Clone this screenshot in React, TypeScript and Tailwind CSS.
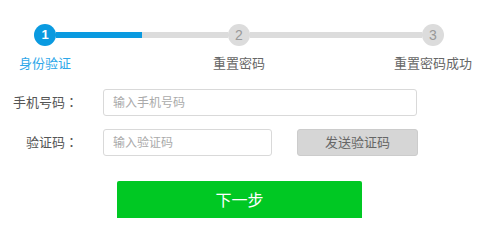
import React from 'react'

const font = { fontFamily: '"Liberation Sans", "Noto Sans CJK SC", sans-serif' }
const colon = { fontFamily: '"Noto Sans CJK TC", sans-serif' }

function Circle({ n, active }: { n: number; active?: boolean }) {
    return (
        <div className={`w-[22px] h-[22px] shrink-0 rounded-full flex items-center justify-center ${active ? 'bg-[#0a9ae0] text-white font-bold text-[13px]' : 'bg-[#dcdcdc] text-[#999] text-[14px]'}`}>
            {n}
        </div>
    )
}

function Label({ text, active }: { text: string; active?: boolean }) {
    return (
        <div className="w-[22px] flex justify-center">
            <span className={`whitespace-nowrap text-[13px] leading-[18px] ${active ? 'text-[#2ea7e9]' : 'text-[#666]'}`}>{text}</span>
        </div>
    )
}

export default function App() {
    return (
        <div className="w-[480px] h-[218px] overflow-hidden bg-white" style={font}>
            {/* steps */}
            <div className="pt-[24px] pl-[34px] pr-[36px]">
                <div className="flex items-center">
                    <Circle n={1} active />
                    <div className="flex-1 flex h-[6px]">
                        <div className="flex-1 bg-[#0a9ae0]"></div>
                        <div className="flex-1 bg-[#dcdcdc]"></div>
                    </div>
                    <Circle n={2} />
                    <div className="flex-1 h-[6px] bg-[#dcdcdc]"></div>
                    <Circle n={3} />
                </div>
                <div className="flex justify-between mt-[9px]">
                    <Label text="身份验证" active />
                    <Label text="重置密码" />
                    <Label text="重置密码成功" />
                </div>
            </div>

            {/* form */}
            <div className="mt-[16px] flex flex-col gap-[13px]">
                <div className="flex items-center">
                    <label className="w-[78px] text-right text-[13px] text-[#555]">手机号码<span style={colon}>：</span></label>
                    <input className="ml-[25px] w-[314px] h-[27px] border border-[#d9d9d9] rounded-[3px] px-[9px] text-[12px] outline-none placeholder:text-[#aaa]" placeholder="输入手机号码" />
                </div>
                <div className="flex items-center">
                    <label className="w-[78px] text-right text-[13px] text-[#555]">验证码<span style={colon}>：</span></label>
                    <input className="ml-[25px] w-[169px] h-[27px] border border-[#d9d9d9] rounded-[3px] px-[9px] text-[12px] outline-none placeholder:text-[#aaa]" placeholder="输入验证码" />
                    <button className="ml-[25px] w-[121px] h-[27px] bg-[#d6d6d6] border border-[#cccccc] rounded-[3px] text-[13px] text-[#666]">发送验证码</button>
                </div>
            </div>

            <div className="mt-[25px] flex">
                <button className="ml-[117px] w-[245px] h-[40px] bg-[#00c823] rounded-[2px] text-white text-[16px]">下一步</button>
            </div>
        </div>
    )
}
